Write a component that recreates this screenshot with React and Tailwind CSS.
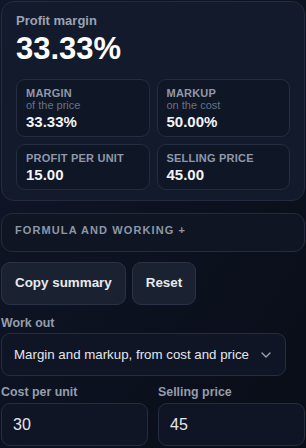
import React from "react";

const font = { fontFamily: '"Liberation Sans", Arial, sans-serif' };

function Stat({ label, sub, value }) {
  return (
    <div className="rounded-[9px] border border-[#242d3f] bg-[#0f1626] pl-[9px] pr-2 pt-[7px] pb-[4px]">
      <div className="text-[11px] leading-[12px] font-bold uppercase tracking-[0.02em] text-[#8f98a9]">{label}</div>
      {sub && <div className="text-[11px] leading-[12px] text-[#687184]">{sub}</div>}
      <div className="text-[15px] leading-[21px] font-bold text-[#f3f4f6]">{value}</div>
    </div>
  );
}

export default function App() {
  return (
    <div
      className="min-h-[448px] w-[306px] overflow-hidden bg-gradient-to-br from-[#10172a] to-[#090d17] pl-px pt-px"
      style={font}
    >
      <div className="w-[304px]">
        <div className="rounded-[13px] border border-[#232c3e] bg-[#121a2b] px-[14px] pt-[11px] pb-[10px]">
          <div className="text-[13px] leading-[16px] font-bold text-[#9aa3b3]">Profit margin</div>
          <div className="mt-[2px] text-[31px] leading-[36px] font-bold text-white">33.33%</div>
          <div className="mt-[12px] grid grid-cols-2 gap-[7px]">
            <Stat label="Margin" sub="of the price" value="33.33%" />
            <Stat label="Markup" sub="on the cost" value="50.00%" />
            <Stat label="Profit per unit" value="15.00" />
            <Stat label="Selling price" value="45.00" />
          </div>
        </div>

        <div className="mt-[12px] h-[39px] rounded-[11px] border border-[#232b3c] bg-[#0f1523] px-[13px] pt-[9px]">
          <div className="text-[11px] leading-[14px] font-bold uppercase tracking-[0.1em] text-[#8e97a8]">
            Formula and working +
          </div>
        </div>

        <div className="mt-[10px] flex gap-[6px]">
          <button className="flex h-[43px] items-center rounded-[9px] border border-[#2a3345] bg-[#1a2131] px-[13px] text-[13.4px] font-bold text-[#e8eaee]">
            Copy summary
          </button>
          <button className="flex h-[43px] items-center rounded-[9px] border border-[#2a3345] bg-[#1a2131] px-[13px] text-[13.4px] font-bold text-[#e8eaee]">
            Reset
          </button>
        </div>

        <div className="mt-[10px] text-[12.4px] leading-[16px] font-bold text-[#949dad]">Work out</div>
        <div className="mt-[2px] flex h-[43px] w-[285px] items-center rounded-[9px] border border-[#252e40] bg-[#0f1524] pl-[12px]">
          <span className="text-[13.3px] text-[#e5e7eb]">Margin and markup, from cost and price</span>
          <svg className="ml-[12px]" width="10" height="6" viewBox="0 0 10 6" fill="none">
            <path d="M1 1l4 4 4-4" stroke="#9ca3af" strokeWidth="1.4" strokeLinecap="round" strokeLinejoin="round" />
          </svg>
        </div>

        <div className="mt-[8px] grid grid-cols-2 gap-x-[10px]">
          <div>
            <div className="text-[12.4px] leading-[16px] font-bold text-[#949dad]">Cost per unit</div>
            <div className="mt-[3px] flex h-[43px] items-center rounded-[9px] border border-[#252e40] bg-[#0f1524] pl-[11px] text-[16px] text-[#e5e7eb]">
              30
            </div>
          </div>
          <div>
            <div className="text-[12.4px] leading-[16px] font-bold text-[#949dad]">Selling price</div>
            <div className="mt-[3px] flex h-[43px] items-center rounded-[9px] border border-[#252e40] bg-[#0f1524] pl-[11px] text-[16px] text-[#e5e7eb]">
              45
            </div>
          </div>
        </div>
      </div>
    </div>
  );
}
